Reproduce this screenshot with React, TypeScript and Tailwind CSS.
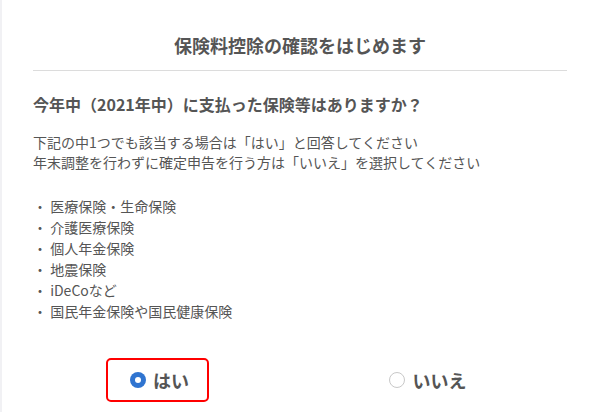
const items = [
  '医療保険・生命保険',
  '介護医療保険',
  '個人年金保険',
  '地震保険',
  'iDeCoなど',
  '国民年金保険や国民健康保険',
]

function Radio({ checked }: { checked: boolean }) {
  return checked ? (
    <span className="flex h-[16px] w-[16px] items-center justify-center rounded-full bg-[#2f74d0]">
      <span className="h-[6px] w-[6px] rounded-full bg-white" />
    </span>
  ) : (
    <span className="h-[16px] w-[16px] rounded-full border border-[#c8c8c8] bg-white" />
  )
}

export default function App() {
  return (
    <div
      className="flex h-[412px] w-[598px] overflow-hidden bg-white text-[#555]"
      style={{ fontFamily: '"Noto Sans CJK JP", "Noto Sans", sans-serif' }}
    >
      <div className="w-[2px] shrink-0 bg-[#f1f1f4]" />
      <main className="flex-1 px-[31px]">
        <h1 className="border-b border-[#dcdcdc] pt-[32px] pb-[11px] text-center text-[18px] font-bold leading-[27px]">
          保険料控除の確認をはじめます
        </h1>

        <h2 className="mt-[21px] text-[16px] font-bold leading-[24px]">
          今年中（2021年中）に支払った保険等はありますか？
        </h2>

        <div className="mt-[16px] text-[14px] leading-[20px]">
          <p>下記の中1つでも該当する場合は「はい」と回答してください</p>
          <p>年末調整を行わずに確定申告を行う方は「いいえ」を選択してください</p>
        </div>

        <ul className="mt-[24px] text-[14px] leading-[21px]">
          {items.map((item) => (
            <li key={item}>・ {item}</li>
          ))}
        </ul>

        <div className="mt-[36px] grid grid-cols-2">
          <div className="flex justify-center pr-[18px]">
            <label className="flex h-[44px] w-[103px] items-center justify-center gap-[7px] rounded-[5px] border-2 border-[#ff0000] pl-[4px]">
              <Radio checked />
              <span className="text-[18px] font-bold">はい</span>
            </label>
          </div>
          <div className="flex justify-center pr-[12px]">
            <label className="flex h-[44px] items-center gap-[8px]">
              <Radio checked={false} />
              <span className="text-[18px] font-bold">いいえ</span>
            </label>
          </div>
        </div>
      </main>
    </div>
  )
}
